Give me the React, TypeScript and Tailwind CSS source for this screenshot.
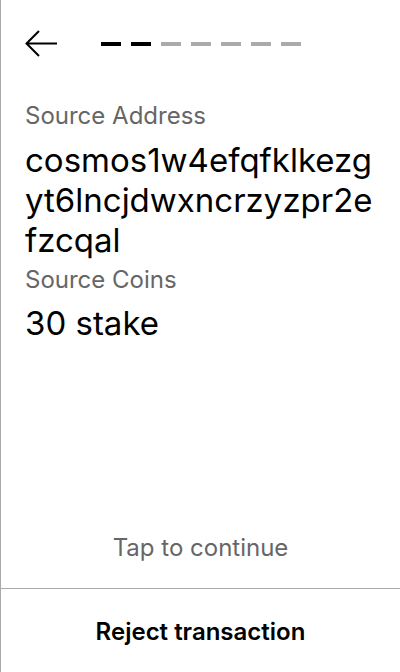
import React from "react";

export default function App() {
  const steps = [true, true, false, false, false, false, false];
  return (
    <div
      className="flex h-[672px] w-[400px] flex-col border-l border-[#aaaaaa] bg-white text-black"
      style={{ fontFamily: "Inter, 'Noto Sans', sans-serif" }}
    >
      <div className="flex items-center px-6 pt-[30px]">
        <svg width="32" height="28" viewBox="0 0 32 28" fill="none" className="shrink-0">
          <path d="M32 13.5H2M14 1L1.5 13.5L14 26" stroke="black" strokeWidth="2" />
        </svg>
        <div className="ml-[44px] flex gap-[10px]">
          {steps.map((on, i) => (
            <div key={i} className={`h-[4px] w-[20px] ${on ? "bg-black" : "bg-[#aaaaaa]"}`} />
          ))}
        </div>
      </div>

      <div className="flex flex-col px-6 pt-[42px]">
        <div className="mb-[8px] text-[24px] leading-[32px] text-[#666666]">Source Address</div>
        <div className="mb-[4px] break-all text-[33px] leading-[40px]">cosmos1w4efqfklkezgyt6lncjdwxncrzyzpr2efzcqal</div>
        <div className="mb-[7px] text-[24px] leading-[32px] text-[#666666]">Source Coins</div>
        <div className="text-[33px] leading-[40px]">30 stake</div>
      </div>

      <div className="flex-1" />
      <div className="pb-[24px] text-center text-[24px] leading-[32px] text-[#666666]">Tap to continue</div>
      <div className="border-t border-[#aaaaaa]" />
      <div className="flex h-[83px] items-center justify-center pt-[2px] text-[24px] font-semibold">Reject transaction</div>
    </div>
  );
}
